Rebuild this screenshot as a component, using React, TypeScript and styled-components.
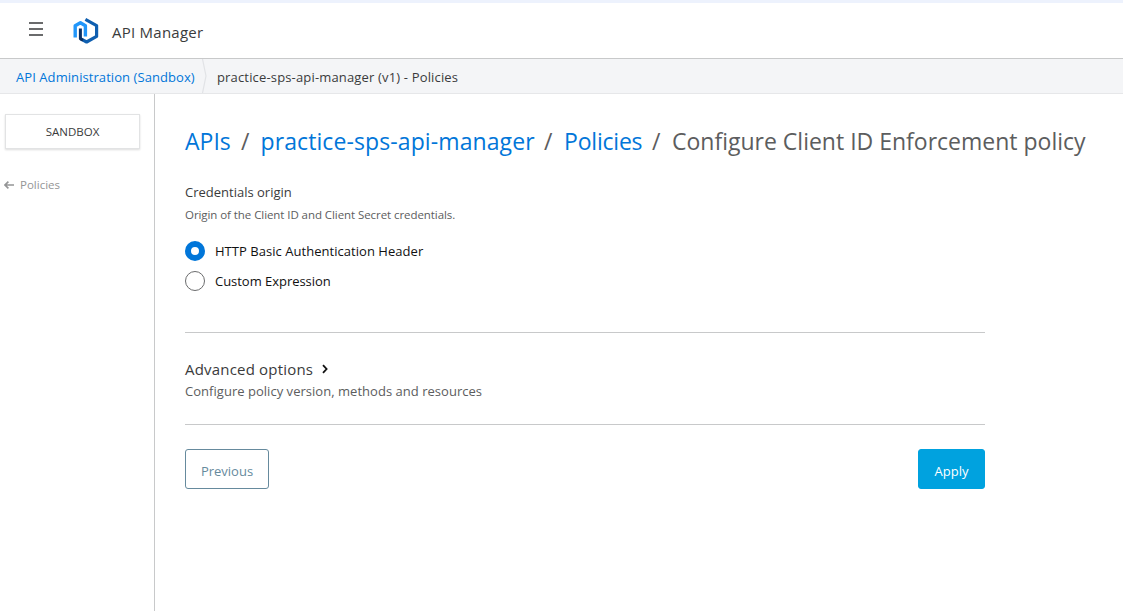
import React, { useState } from "react";
import styled, { createGlobalStyle } from "styled-components";

const GlobalStyle = createGlobalStyle`
  *, *::before, *::after { box-sizing: border-box; }
  html, body { margin: 0; padding: 0; background: #fff; }
  body {
    font-family: "Open Sans", "Noto Sans", sans-serif;
    color: #3a3b3c;
    overflow: hidden;
  }
  button { font-family: inherit; }
`;

const Page = styled.div`
  display: flex;
  flex-direction: column;
  height: 100vh;
  border-top: 3px solid #edf2fd;
`;

const Text = styled.span<{ $size: number; $line: number; $color?: string; $track?: number }>`
  font-size: ${(p) => p.$size}px;
  line-height: ${(p) => p.$line}px;
  letter-spacing: ${(p) => p.$track ?? 0}px;
  color: ${(p) => p.$color ?? "#3a3b3c"};
  white-space: nowrap;
`;

const TopBar = styled.header`
  display: flex;
  align-items: flex-start;
  height: 56px;
  flex: none;
  border-bottom: 1px solid #c8c9ca;
`;

const MenuButton = styled.button`
  display: flex;
  flex-direction: column;
  justify-content: space-between;
  width: 14px;
  height: 14px;
  margin: 19px 0 0 29px;
  padding: 0;
  border: 0;
  background: none;
`;

const MenuLine = styled.span`
  height: 2px;
  background: #6a6b6c;
`;

const Logo = styled.svg`
  margin: 14px 0 0 30px;
  flex: none;
`;

const ProductName = styled.div`
  display: flex;
  margin: 18px 0 0 12px;
`;

const CrumbBar = styled.nav`
  display: flex;
  height: 35px;
  flex: none;
  padding-left: 16px;
  background: #f4f5f7;
  border-bottom: 1px solid #e6e7e9;
`;

const Crumb = styled.div<{ $width?: number }>`
  display: flex;
  padding-top: 8px;
  width: ${(p) => (p.$width ? `${p.$width}px` : "auto")};
`;

const CrumbDivider = styled.svg`
  margin-right: 10px;
  flex: none;
`;

const Body = styled.div`
  display: flex;
  flex: 1;
`;

const Sidebar = styled.aside`
  width: 155px;
  flex: none;
  padding: 20px 0 0 4px;
  border-right: 1px solid #c8c9ca;
`;

const Environment = styled.div`
  display: flex;
  justify-content: center;
  align-items: center;
  width: 135px;
  height: 35px;
  margin: 0 0 0 1px;
  padding-top: 1px;
  border: 1px solid #e2e3e4;
  box-shadow: 0 1px 2px #dcdcdc;
`;

const BackLink = styled.div`
  display: flex;
  align-items: center;
  gap: 6px;
  margin-top: 27px;
`;

const Main = styled.main`
  flex: 1;
  padding: 29px 0 0 30px;
`;

const Title = styled.h1`
  display: flex;
  margin: 0;
  font-weight: 400;
  height: 37px;
`;

const TitlePart = styled.span<{ $width: number }>`
  display: flex;
  width: ${(p) => p.$width}px;
`;

const Form = styled.form`
  width: 800px;
`;

const Field = styled.div`
  display: flex;
  flex-direction: column;
  align-items: flex-start;
  gap: 3px;
  padding-top: 22px;
  height: 172px;
`;

const Options = styled.div`
  display: flex;
  flex-direction: column;
  gap: 10px;
  margin-top: 13px;
`;

const Option = styled.label`
  display: flex;
  align-items: center;
  gap: 10px;
  height: 20px;
`;

const Radio = styled.input<{ checked?: boolean }>`
  appearance: none;
  width: 20px;
  height: 20px;
  margin: 0;
  border-radius: 50%;
  background: #fff;
  border: ${(p) => (p.checked ? "6px solid #0176d9" : "1px solid #6b6c6d")};
`;

const Advanced = styled.section`
  display: flex;
  flex-direction: column;
  height: 93px;
  padding-top: 24px;
  border-top: 1px solid #c8c9ca;
  border-bottom: 1px solid #c8c9ca;
`;

const AdvancedHead = styled.div`
  display: flex;
  align-items: center;
  gap: 9px;
`;

const Actions = styled.div`
  display: flex;
  justify-content: space-between;
  margin-top: 24px;
`;

const ActionButton = styled.button<{ $primary?: boolean; $width: number }>`
  display: flex;
  justify-content: center;
  width: ${(p) => p.$width}px;
  height: 40px;
  padding: 11px 0 0;
  border-radius: 3px;
  border: 1px solid ${(p) => (p.$primary ? "#00a2df" : "#668a9d")};
  background: ${(p) => (p.$primary ? "#00a2df" : "#fff")};
`;

const BLUE = "#0176d9";
const GREY = "#5c5d5e";

export default function App() {
  const [origin, setOrigin] = useState("basic");
  return (
    <>
      <GlobalStyle />
      <Page>
        <TopBar>
          <MenuButton type="button" aria-label="Menu">
            <MenuLine />
            <MenuLine />
            <MenuLine />
          </MenuButton>
          <Logo width="27" height="28" viewBox="0 0 27 28" fill="none" strokeLinejoin="round">
            <path d="M12.4 2.4 L23.6 8.6 V19.4 L13.6 25 L7.4 21.6" stroke="#0f5fb0" strokeWidth="3.2" />
            <path d="M7.4 11.6 V21.8 L10 23.2" stroke="#0a2f63" strokeWidth="3" />
            <path d="M2.2 20.4 V8.8 L7.4 5.8 L12.4 8.8 V19.6" stroke="#2196fa" strokeWidth="3.4" />
          </Logo>
          <ProductName>
            <Text $size={15} $line={22} $track={0.25}>API Manager</Text>
          </ProductName>
        </TopBar>
        <CrumbBar>
          <Crumb $width={186}>
            <Text $size={13} $line={20} $track={0.07} $color={BLUE}>API Administration (Sandbox)</Text>
          </Crumb>
          <CrumbDivider width="5" height="34" viewBox="0 0 5 34" fill="none">
            <path d="M0.5 0 L4 17 L0.5 34" stroke="#e1e3e6" strokeWidth="1.2" />
          </CrumbDivider>
          <Crumb>
            <Text $size={13} $line={20} $track={0.16}>practice-sps-api-manager (v1) - Policies</Text>
          </Crumb>
        </CrumbBar>
        <Body>
          <Sidebar>
            <Environment>
              <Text $size={11.5} $line={18}>SANDBOX</Text>
            </Environment>
            <BackLink>
              <svg width="10" height="8" viewBox="0 0 10 8" fill="none" stroke="#949596" strokeWidth="1.6">
                <path d="M4.4 0.6 L1 4 L4.4 7.4 M1 4 H10" />
              </svg>
              <Text $size={11.5} $line={18} $color="#949596">Policies</Text>
            </BackLink>
          </Sidebar>
          <Main>
            <Title>
              <TitlePart $width={56}><Text $size={23} $line={36} $color={BLUE}>APIs</Text></TitlePart>
              <TitlePart $width={19.5}><Text $size={23} $line={36} $color={GREY}>/</Text></TitlePart>
              <TitlePart $width={283.5}><Text $size={23} $line={36} $track={0.1} $color={BLUE}>practice-sps-api-manager</Text></TitlePart>
              <TitlePart $width={20}><Text $size={23} $line={36} $color={GREY}>/</Text></TitlePart>
              <TitlePart $width={88}><Text $size={23} $line={36} $track={-0.2} $color={BLUE}>Policies</Text></TitlePart>
              <TitlePart $width={20}><Text $size={23} $line={36} $color={GREY}>/</Text></TitlePart>
              <TitlePart $width={430}><Text $size={23} $line={36} $color={GREY}>Configure Client ID Enforcement policy</Text></TitlePart>
            </Title>
            <Form>
              <Field>
                <Text $size={13} $line={20}>Credentials origin</Text>
                <Text $size={11.5} $line={20} $track={-0.07} $color={GREY}>Origin of the Client ID and Client Secret credentials.</Text>
                <Options>
                  <Option>
                    <Radio type="radio" name="origin" checked={origin === "basic"} onChange={() => setOrigin("basic")} />
                    <Text $size={13} $line={20} $track={0.04} $color="#111">HTTP Basic Authentication Header</Text>
                  </Option>
                  <Option>
                    <Radio type="radio" name="origin" checked={origin === "custom"} onChange={() => setOrigin("custom")} />
                    <Text $size={13} $line={20} $track={-0.03} $color="#111">Custom Expression</Text>
                  </Option>
                </Options>
              </Field>
              <Advanced>
                <AdvancedHead>
                  <Text $size={15} $line={24} $track={0.19}>Advanced options</Text>
                  <svg width="6" height="10" viewBox="0 0 6 10" fill="none" stroke="#111" strokeWidth="1.8">
                    <path d="M1 1.2 L4.6 5 L1 8.8" />
                  </svg>
                </AdvancedHead>
                <Text $size={13} $line={20} $track={0.03} $color={GREY}>Configure policy version, methods and resources</Text>
              </Advanced>
              <Actions>
                <ActionButton type="button" $width={84}>
                  <Text $size={13} $line={20} $color="#668a9d">Previous</Text>
                </ActionButton>
                <ActionButton type="button" $primary $width={67}>
                  <Text $size={13} $line={20} $color="#fff">Apply</Text>
                </ActionButton>
              </Actions>
            </Form>
          </Main>
        </Body>
      </Page>
    </>
  );
}
